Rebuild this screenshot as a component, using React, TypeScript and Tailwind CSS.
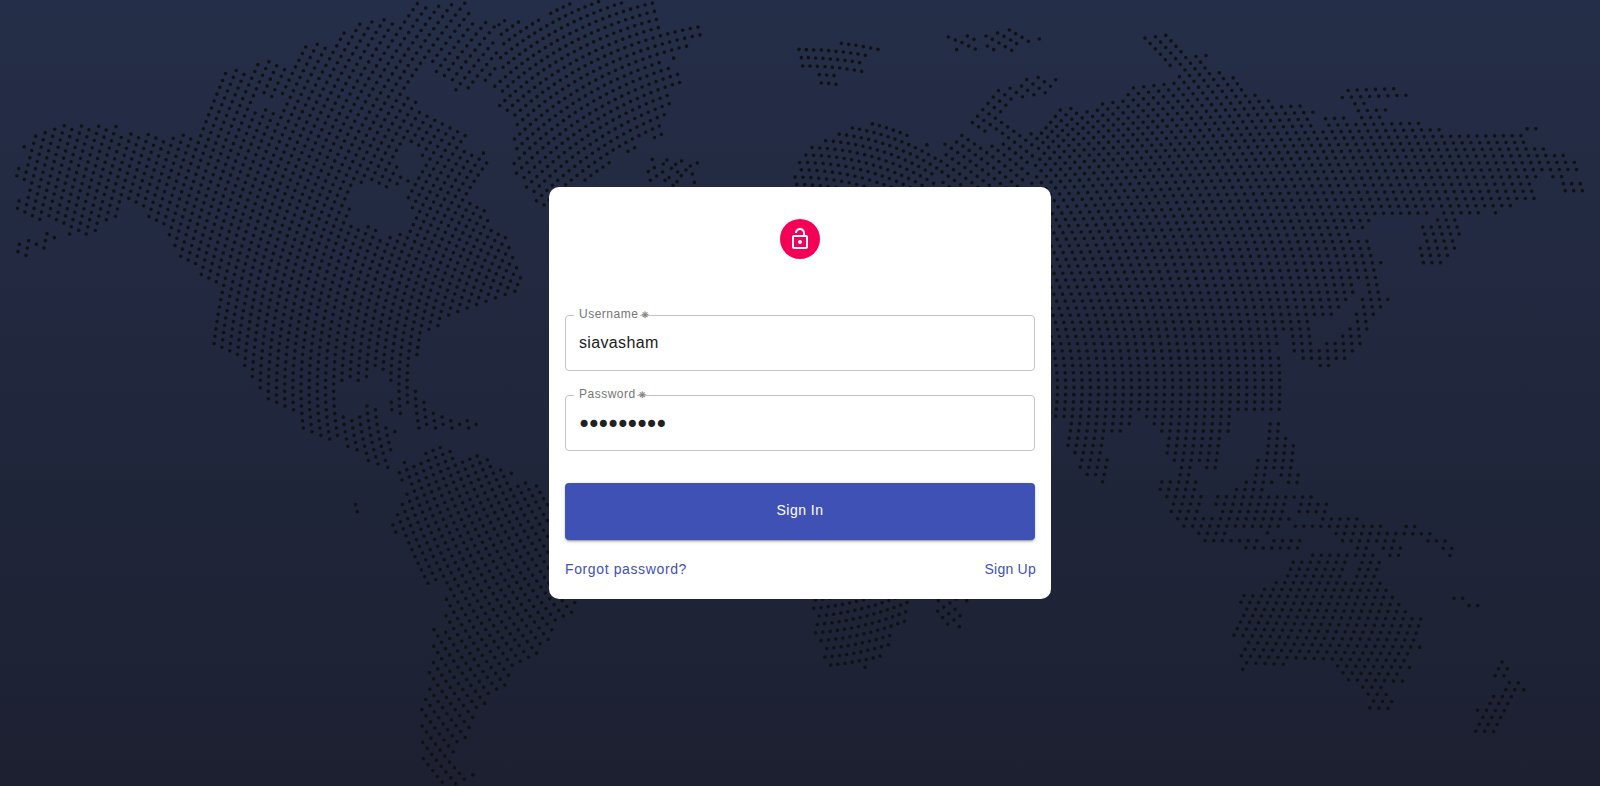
import React from "react";

type Pt = [number, number];

const nums = (s: string) => s.trim().split(/[\s,]+/).map(Number);

const pairs = (s: string, ox = 0, oy = 0): Pt[] => {
  const n = nums(s);
  const out: Pt[] = [];
  for (let i = 0; i < n.length; i += 2) out.push([n[i] + ox, n[i + 1] + oy]);
  return out;
};

const inside = ([x, y]: Pt, poly: Pt[]) => {
  let hit = false;
  for (let i = 0, j = poly.length - 1; i < poly.length; j = i++) {
    const [xi, yi] = poly[i];
    const [xj, yj] = poly[j];
    if (yi > y !== yj > y && x < ((xj - xi) * (y - yi)) / (yj - yi) + xi) hit = !hit;
  }
  return hit;
};

/* Map coordinates are in thirds of a pixel. */

// Row knots for the eastern grid: row, x, y, spacing, stretch, bend
const KNOTS = [
  [-50, 3452, 2207, 26.3, 60, 60],
  [-39, 3589, 2001, 26.3, 35, 32],
  [-34, 3647, 1903, 26.2, 26, 26],
  [-27, 3715, 1767, 25.8, 8, 7],
  [-22, 3757, 1665, 25.6, 6, 2],
  [-12, 3815, 1447, 25.2, 2, 1],
  [0, 3839, 1184, 24.7, 0, 0],
  [9, 3825, 987, 25, 1, -0.5],
  [19, 3777, 769, 25.4, 10, -4.5],
  [26, 3725, 624, 25.6, 16, -9],
  [32, 3668, 502, 25.85, 24, -17],
  [38, 3600, 391, 26, 45, -30],
  [43, 3534, 304, 26.2, 65, -55],
  [50, 3434, 187, 27, 85, -80],
  [55, 3356, 107, 27, 100, -95],
];

const knot = (j: number) => {
  let a = 0;
  while (a < KNOTS.length - 2 && KNOTS[a + 1][0] <= j) a++;
  const p1 = KNOTS[a];
  const p2 = KNOTS[a + 1];
  const p0 = KNOTS[a - 1] ?? p1;
  const p3 = KNOTS[a + 2] ?? p2;
  const h = p2[0] - p1[0];
  const t = (j - p1[0]) / h;
  return p1.map((v, c) => {
    const m1 = ((p2[c] - p0[c]) / (p2[0] - p0[0])) * h;
    const m2 = ((p3[c] - p1[c]) / (p3[0] - p1[0])) * h;
    const t2 = t * t;
    const t3 = t2 * t;
    return (2 * t3 - 3 * t2 + 1) * v + (t3 - 2 * t2 + t) * m1 + (3 * t2 - 2 * t3) * p2[c] + (t3 - t2) * m2;
  });
};

const east = (k: number, j: number): Pt => {
  const [, x, y, s, d, e] = knot(j);
  const f = 1 - Math.exp(-k / 20);
  return [x + s * k + d * f, y + e * f];
};

const northAmerica = (k: number, j: number): Pt => {
  const m = j - k / 2;
  const g = 0.44 * Math.exp(0.02 * k);
  const mm = Math.max(m, -30);
  const u = 1 + mm / 60;
  const shift = 60 * mm - 3600 * Math.log(u);
  const sag = 216000 * (u - 1 / u - 2 * Math.log(u));
  return [805 + (24.5 - 0.03 * m) * k + g * shift, 1174 - 22.1 * m + (g * g * sag) / 44];
};

const quad =
  (o: Pt, u: Pt, v: Pt, uu: Pt, uv: Pt, vv: Pt) =>
  (k: number, j: number): Pt => [
    o[0] + u[0] * k + v[0] * j + uu[0] * k * k + uv[0] * k * j + vv[0] * j * j,
    o[1] + u[1] * k + v[1] * j + uu[1] * k * k + uv[1] * k * j + vv[1] * j * j,
  ];

interface Region {
  grid: (k: number, j: number) => Pt;
  k: Pt;
  j: Pt;
  land: Pt[][];
  sea?: Pt[][];
}

const asia = [
  ...pairs(
    "3060 700 3125 385 3175 310 3235 325 3290 318 3308 295 3355 308 3385 268 3431 246 3480 260 3515 240 3500 222 3540 215 3530 205 3495 205 3440 130 3420 108 3500 98 3560 155 3622 155 3640 215 3710 223 3750 280 3812 292 3850 310 3912 308 3950 330 3940 360 3945 385 3965 380 3970 346 4042 344 4055 365 4080 358 4070 325 4058 303 4020 303 4020 285 4035 262 4195 258 4235 285 4232 298 4100 300 4105 320 4170 320 4160 358 4215 360 4330 378 4330 396 4575 395 4578 372 4620 372 4620 392 4578 396 4585 432 4640 436 4675 460 4735 478 4740 515 4695 517 4695 537 4650 540 4640 518 4615 518 4615 540 4595 540 4610 605 4510 622 4490 648 4475 645 4475 628 4440 630 4440 648 4370 652 4385 700 4365 745 4345 785 4300 800 4262 800 4256 675 4300 668 4305 648 4320 648 4320 625 4290 625 4285 650 4120 652 4115 672 4095 692 4050 698 4050 715 4105 715 4125 780 4150 782 4148 800 4125 820 4142 885 4170 892 4148 930 4125 950 4108 990 4090 1040 4065 1060 4015 1085 3965 1105 3945 1100 3925 1080 3870 1062 3868 1000 3845 1000 3845 1040 3820 1043 3820 1063 3850 1063"
  ),
  ...pairs(
    "700 454 555 455 552 475 545 497 522 520 515 560 512 600 505 630 465 630 465 608 430 608 430 650 380 650 385 608 362 600 345 580 348 525 325 515 305 495 280 475 280 455 255 455 252 475 227 497 200 517 172 530 165 580 185 590 178 640 165 672 150 670 140 650 105 650 85 620 68 585 48 560 55 480 0 475 -60 475",
    3150,
    786
  ),
];

const REGIONS: Region[] = [
  {
    grid: east,
    k: [-50, 50],
    j: [-50, 55],
    land: [
      asia,
      pairs(
        "25 88 148 88 143 130 163 140 155 190 160 196 425 196 425 215 395 238 235 238 230 258 330 260 330 280 158 280 140 255 95 235 75 212 55 190 60 168 40 148 22 124",
        3450,
        1350
      ),
      pairs(
        "650 478 697 478 695 520 715 522 740 548 733 625 753 635 748 672 705 672 690 650 682 628 655 628 672 655 672 670 645 695 790 698 790 715 835 720 830 758 740 758 742 718 712 718 705 760 512 760 515 738 490 735 498 698 550 696 552 676 580 653 610 650 612 590 640 580 652 520",
        3150,
        786
      ),
      pairs(
        "428 220 510 220 508 198 628 198 630 220 700 220 700 241 755 241 757 220 800 220 800 241 845 243 890 263 930 325 890 325 870 300 855 284 820 284 820 263 740 263 760 295 755 325 710 325 690 300 690 282 657 282 655 303 610 303 612 284 568 282 545 241 428 240",
        3450,
        1350
      ),
      pairs(
        "480 304 655 304 698 328 690 385 720 410 745 440 780 478 795 495 823 500 800 575 818 590 785 610 792 655 760 662 775 692 745 700 715 703 725 735 745 750 722 800 705 795 658 775 660 745 635 710 595 697 555 655 540 635 420 631 412 650 300 648 280 665 268 655 265 610 285 585 282 572 240 560 262 510 280 480 262 462 275 428 336 425 338 408 372 390 405 385 420 325 478 325",
        3450,
        1350
      ),
      pairs(
        "1050 625 1085 655 1075 688 1118 690 1140 720 1115 730 1095 770 1060 790 1030 850 955 850 985 765 1020 755 1003 730 1060 728 1075 700 1025 685",
        3450,
        1350
      ),
      pairs("365 262 460 262 452 302 280 302 282 282 365 282", 3450, 1350),
    ],
    sea: [
      pairs(
        "930 60 945 100 920 105 925 145 903 150 905 190 885 195 862 215 860 232 815 235 810 255 792 240 785 210 785 168 855 167 875 145 897 122 920 98 915 60",
        3150,
        786
      ),
      pairs("595 326 627 326 612 388 580 388", 3450, 1350),
    ],
  },
  {
    grid: northAmerica,
    k: [-45, 40],
    j: [-30, 90],
    land: [
      pairs(
        "45 435 75 425 110 395 145 382 180 372 345 374 360 400 435 397 480 418 510 408 545 398 590 400 600 380 612 382 610 345 628 300 630 250 650 255 690 202 740 205 780 180 800 178 820 190 848 178 870 210 895 150 940 125 975 145 1000 135 1028 95 1045 105 1090 56 1130 50 1160 62 1190 55 1240 10 1360 3 1430 10 1400 50 1435 70 1475 58 1490 75 1490 240 1465 235 1410 280 1365 282 1335 235 1305 225 1300 190 1270 205 1240 240 1215 280 1205 285 1255 305 1262 330 1400 395 1400 440 1415 455 1450 445 1465 485 1440 525 1400 585 1410 598 1455 620 1480 685 1525 700 1550 770 1575 825 1560 875 1495 900 1440 920 1355 950 1300 990 1270 1020 1260 1070 1235 1080 1232 1165 1258 1165 1285 1230 1340 1245 1435 1268 1430 1290 1245 1292 1240 1210 1205 1248 1165 1235 1170 1195 1190 1190 1190 1150 1165 1145 1140 1110 1110 1110 1110 1140 1080 1150 1010 1150 1012 1245 1035 1245 1045 1270 1070 1250 1090 1205 1140 1210 1138 1280 1190 1285 1190 1300 1170 1310 1178 1400 1170 1412 1140 1412 1070 1360 1000 1318 950 1315 895 1290 895 1240 820 1215 795 1205 770 1165 745 1110 700 1060 650 1045 630 1010 650 860 605 835 560 790 520 775 525 740 510 710 500 690 440 650 410 625 385 612 335 660 285 700 190 712 190 684 120 658 75 658 45 640 58 585 80 580 85 550 45 548 55 490 85 480 90 455 45 452"
      ),
    ],
    sea: [
      pairs("1080 548 1140 560 1165 600 1190 555 1215 560 1212 600 1235 650 1225 680 1205 700 1170 700 1140 705 1125 680 1060 670 1045 640 1055 600"),
      pairs("1212 440 1262 450 1270 480 1250 510 1240 535 1210 520 1200 480"),
      pairs("757 300 795 292 815 303 850 296 865 318 840 325 800 328 765 328"),
    ],
  },
  {
    grid: quad([1975, 83], [22, -6], [6, 24.5], [0.13, 0.18], [-0.05, -0.18], [0, 0]),
    k: [-34, 12],
    j: [-20, 30],
    land: [
      pairs(
        "1490 60 1560 55 1605 60 1640 55 1655 20 1675 5 1715 10 1780 4 1965 4 1985 85 2050 75 2112 80 2120 92 2080 128 2050 160 2010 180 1985 165 1975 200 2030 210 2045 245 2000 265 2010 310 1995 350 1985 375 1990 410 1960 420 1935 410 1910 455 1860 460 1820 495 1790 530 1720 560 1640 625 1620 620 1570 570 1545 510 1535 475 1548 450 1520 420 1540 400 1550 370 1525 350 1495 315 1510 290 1465 280 1490 240"
      ),
    ],
  },
  {
    grid: quad([1274, 1730], [23, -10.5], [10, 20], [0, 0], [0.1, -0.1], [0.11, -0.07]),
    k: [-30, 40],
    j: [-35, 50],
    land: [
      pairs(
        "1185 1400 1215 1385 1250 1395 1260 1365 1300 1345 1330 1330 1365 1340 1370 1370 1415 1365 1470 1362 1480 1395 1530 1405 1540 1440 1560 1440 1625 1460 1640 1510 1700 1550 1740 1780 1740 1797 1730 1838 1680 1862 1655 1895 1640 1930 1600 1970 1545 2005 1535 2055 1480 2080 1455 2115 1418 2158 1410 2210 1375 2250 1370 2290 1385 2325 1420 2300 1425 2320 1390 2358 1340 2358 1315 2340 1275 2305 1258 2245 1255 2200 1275 2060 1300 1980 1298 1880 1328 1890 1330 1745 1280 1762 1255 1700 1180 1590 1172 1556 1200 1540 1205 1480 1225 1450 1190 1435"
      ),
    ],
  },
  {
    grid: quad([2557, 384], [22, 3.6], [5, 25], [-0.11, 0.33], [0, 0.35], [0, 0]),
    k: [-14, 16],
    j: [-4, 12],
    land: [pairs("2365 560 2380 510 2420 440 2475 410 2515 392 2555 375 2630 368 2690 382 2730 400 2750 435 2790 425 2800 450 2815 460 2815 600 2365 600")],
  },
  {
    grid: quad([2917, 368], [19, 12.5], [-15.7, 19.3], [-0.08, 0.08], [0, 0], [0, 0]),
    k: [-10, 26],
    j: [-20, 20],
    land: [
      pairs(
        "2815 460 2835 430 2870 400 2890 398 2940 435 2980 425 3012 430 3000 405 2965 398 2945 400 2905 372 2945 320 2990 265 3030 255 3075 228 3120 222 3170 235 3140 285 3060 298 3000 345 3010 365 3060 400 3095 395 3125 415 3125 600 2815 600"
      ),
    ],
  },
  {
    grid: quad([2441, 1825], [22, -2], [-5.5, 25], [-0.1, -0.24], [0.1, 0.25], [0, 0]),
    k: [-4, 18],
    j: [-4, 12],
    land: [pairs("2425 1740 2730 1740 2735 1800 2730 1868 2684 1898 2682 1940 2640 1978 2590 1998 2480 2005 2478 1985 2465 1955 2440 1905 2445 1850 2430 1830")],
  },
];

const ISLANDS: Pt[] = [
  ...pairs(
    "757 478 801 480 845 483 892 489 790 492 827 493 871 498 763 503 745 515 788 516 814 505 858 510 833 516 770 528 807 533 844 527 877 522 751 541 795 541 831 545 883 547 819 556",
    1200,
    0
  ),
  ...pairs(
    "124 130 146 133 168 136 190 140 212 144 234 148 -3 148 19 149 41 150 64 150 86 152 108 154 130 156 152 159 174 162 196 166 4 173 25 173 47 174 69 175 91 177 113 179 135 181 157 184 179 188 8 198 30 198 52 199 75 200 97 202 119 204 141 207 163 210 185 214 58 224 80 225 102 227 64 249 86 250 108 253",
    2400,
    0
  ),
  ...pairs(
    "445 111 466 120 502 108 522 118 486 128 506 138 470 149 526 147 558 108 593 99 628 90 577 118 612 109 647 101 597 129 632 120 666 112 562 138 616 140 650 131 685 124 581 149 635 151 718 117",
    2400,
    0
  ),
  ...pairs("475 32 510 39 560 32 491 51 473 64 525 58 506 71 488 83 540 77 522 90 503 102 538 110 528 27", 2340, 1770),
  ...pairs("912 445 938 445 957 467 983 467 353 249", 3450, 1350),
  ...pairs("1090 551 1115 551 1141 551 1096 572 1121 572 1147 572", 3600, 0),
  ...pairs("58 733 54 755 86 722 82 744 78 766 109 733 141 701 136 722 132 744 163 713"),
  ...pairs("617 728 622 749", 450, 786),
  [2595, 2002],
];

// Neighbouring grids may meet on the same spot; the first dot wins.
const MIN_GAP = 16;
const DOTS: Pt[] = [...ISLANDS];
const isFree = ([x, y]: Pt) => !DOTS.some(([a, b]) => Math.hypot(a - x, b - y) < MIN_GAP);

for (const r of REGIONS) {
  for (let j = r.j[0]; j <= r.j[1]; j++) {
    for (let k = r.k[0]; k <= r.k[1]; k++) {
      const p = r.grid(k, j);
      if (r.land.some((l) => inside(p, l)) && !r.sea?.some((s) => inside(p, s)) && isFree(p)) DOTS.push(p);
    }
  }
}

const DOT_PATH = DOTS.map(([x, y]) => `M${x.toFixed(1)} ${y.toFixed(1)}h0`).join("");

function WorldMap() {
  return (
    <svg className="pointer-events-none absolute inset-0" width="1600" height="786" viewBox="0 0 4800 2358" aria-hidden="true">
      <path d={DOT_PATH} stroke="#101112" strokeWidth="10.8" strokeLinecap="round" fill="none" />
    </svg>
  );
}

function Field({ label, type, value, gap, font }: { label: string; type: string; value: string; gap: string; font: string }) {
  return (
    <div className="relative h-14 w-full">
      <fieldset className="absolute inset-x-0 -top-[5px] bottom-0 rounded border border-[#c4c4c4] px-2">
        <legend className={`h-[11px] ${gap}`} />
      </fieldset>
      <label className="absolute left-[14px] -top-[9px] text-[12px] leading-4 tracking-[0.5px] whitespace-nowrap text-[#757575]">
        {label} <span className="-ml-[1px] font-['DejaVu_Sans'] text-[9px] tracking-normal">❋</span>
      </label>
      <input
        type={type}
        defaultValue={value}
        className={`relative h-full w-full bg-transparent text-[#212121] outline-none ${font}`}
      />
    </div>
  );
}

export default function App() {
  return (
    <main className="relative flex h-[786px] w-full items-center justify-center overflow-hidden bg-linear-to-b from-[#252e48] to-[#1c2031] font-['Liberation_Sans',Arial,sans-serif]">
      <WorldMap />
      <form className="relative flex h-[412px] w-[502px] flex-col rounded-[10px] bg-white px-4 pt-8">
        <div className="flex size-10 items-center justify-center self-center rounded-full bg-[#f50057]">
          <svg width="24" height="24" viewBox="0 0 24 24" fill="#fff">
            <path d="M12 17c1.1 0 2-.9 2-2s-.9-2-2-2-2 .9-2 2 .9 2 2 2zm6-9h-1V6c0-2.76-2.24-5-5-5S7 3.24 7 6h1.9c0-1.71 1.39-3.1 3.1-3.1 1.71 0 3.1 1.39 3.1 3.1v2H6c-1.1 0-2 .9-2 2v10c0 1.1.9 2 2 2h12c1.1 0 2-.9 2-2V10c0-1.1-.9-2-2-2zm0 12H6V10h12v10z" />
          </svg>
        </div>
        <div className="mt-14 flex flex-col gap-6">
          <Field label="Username" type="text" value="siavasham" gap="w-[66px]" font="px-[14px] text-[16px] tracking-[0.35px]" />
          <Field
            label="Password"
            type="password"
            value="siavasham"
            gap="w-[63px]"
            font="px-3 pt-[3px] font-['DejaVu_Sans'] text-[24px] tracking-[-4.5px]"
          />
        </div>
        <button
          type="button"
          className="mt-8 h-[57px] w-full shrink-0 rounded bg-[#3f51b5] pb-[2px] text-[14px] tracking-[0.5px] text-white shadow-[0_3px_1px_-2px_rgba(0,0,0,0.2),0_2px_2px_0_rgba(0,0,0,0.14),0_1px_5px_0_rgba(0,0,0,0.12)]"
        >
          Sign In
        </button>
        <div className="mt-[19px] flex justify-between text-[14px] leading-5 text-[#3f51b5]">
          <a href="#forgot" className="tracking-[0.62px]">
            Forgot password?
          </a>
          <a href="#signup" className="-mr-[1px] tracking-[0.25px]">
            Sign Up
          </a>
        </div>
      </form>
    </main>
  );
}
